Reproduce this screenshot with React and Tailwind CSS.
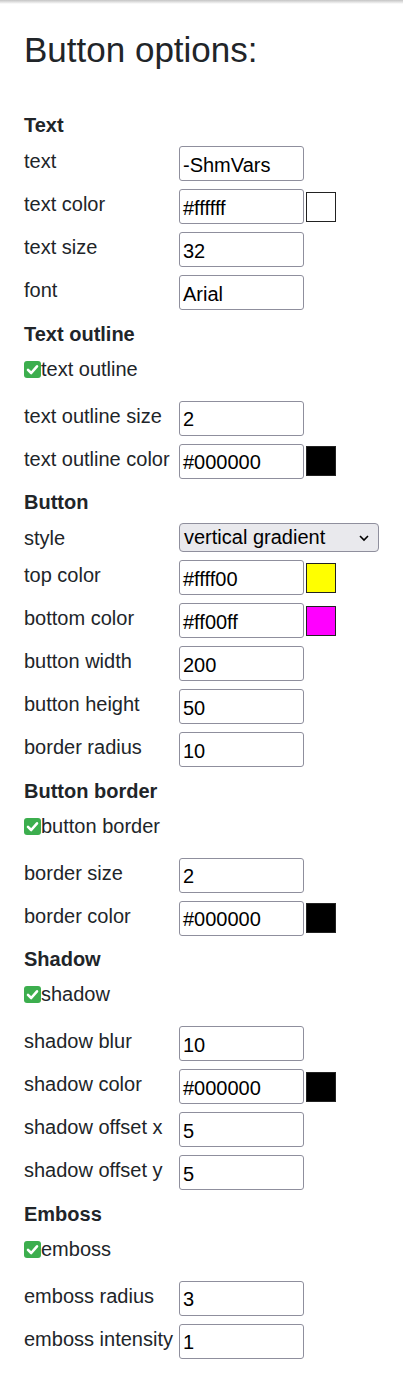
import React from 'react';

const sections = [
    {
        title: 'Text',
        rows: [
            { label: 'text', value: '-ShmVars' },
            { label: 'text color', value: '#ffffff', swatch: '#ffffff' },
            { label: 'text size', value: '32' },
            { label: 'font', value: 'Arial' },
        ],
    },
    {
        title: 'Text outline',
        check: 'text outline',
        rows: [
            { label: 'text outline size', value: '2' },
            { label: 'text outline color', value: '#000000', swatch: '#000000' },
        ],
    },
    {
        title: 'Button',
        rows: [
            { label: 'style', select: 'vertical gradient' },
            { label: 'top color', value: '#ffff00', swatch: '#ffff00' },
            { label: 'bottom color', value: '#ff00ff', swatch: '#ff00ff' },
            { label: 'button width', value: '200' },
            { label: 'button height', value: '50' },
            { label: 'border radius', value: '10' },
        ],
    },
    {
        title: 'Button border',
        check: 'button border',
        rows: [
            { label: 'border size', value: '2' },
            { label: 'border color', value: '#000000', swatch: '#000000' },
        ],
    },
    {
        title: 'Shadow',
        check: 'shadow',
        rows: [
            { label: 'shadow blur', value: '10' },
            { label: 'shadow color', value: '#000000', swatch: '#000000' },
            { label: 'shadow offset x', value: '5' },
            { label: 'shadow offset y', value: '5' },
        ],
    },
    {
        title: 'Emboss',
        check: 'emboss',
        rows: [
            { label: 'emboss radius', value: '3' },
            { label: 'emboss intensity', value: '1' },
        ],
    },
];

function CheckMark() {
    return (
        <svg width="17" height="17" viewBox="0 0 17 17" className="shrink-0">
            <rect x="0" y="0" width="17" height="17" rx="3" fill="#3cae4e" />
            <path d="M4 8.8 L7.2 12 L13 5.3" fill="none" stroke="#ffffff" strokeWidth="2.6" strokeLinecap="round" strokeLinejoin="round" />
        </svg>
    );
}

function Row({ row }) {
    return (
        <div className="flex items-start">
            <div className="w-[155px] shrink-0 pt-[4px] leading-[23px]">{row.label}</div>
            {row.select ? (
                <div className="flex h-[29px] w-[203px] items-center justify-between rounded-[4px] border border-[#8f8f9d] bg-[#e9e9ed] pl-[4px] pr-[8px] text-black leading-[23px]">
                    <span>{row.select}</span>
                    <svg width="12" height="8" viewBox="0 0 12 8">
                        <path d="M2 2 L6 6 L10 2" fill="none" stroke="#000" strokeWidth="1.6" />
                    </svg>
                </div>
            ) : (
                <div className="flex items-center gap-[2px]">
                    <div className="flex h-[35px] w-[125px] items-center rounded-[3px] border border-[#8f8f9d] bg-white px-[3px] pt-[2px] text-black">
                        {row.value}
                    </div>
                    {row.swatch && (
                        <div className="h-[30px] w-[30px] border border-[#222222]" style={{ backgroundColor: row.swatch }} />
                    )}
                </div>
            )}
        </div>
    );
}

function App() {
    return (
        <div className="min-h-screen bg-white text-[20px] text-[#212529]" style={{ fontFamily: '"Liberation Sans", Arial, sans-serif' }}>
            <div className="h-[4px] bg-gradient-to-b from-[#c4c4c4] to-white" />
            <div className="px-[24px] pb-[30px]">
                <h1 className="mt-[26px] text-[35px] leading-[40px] font-normal">Button options:</h1>
                <div className="mt-[44px]">
                    {sections.map((s, i) => (
                        <div key={s.title} className={i === 0 ? '' : 'mt-[12.5px]'}>
                            <div className="h-[23px] font-bold leading-[23px]">{s.title}</div>
                            {s.check && (
                                <div className="mt-[12px] flex h-[23px] items-center leading-[23px]">
                                    <CheckMark />
                                    <span>{s.check}</span>
                                </div>
                            )}
                            <div className={s.check ? 'mt-[20px] flex flex-col gap-[8px]' : 'mt-[9px] flex flex-col gap-[8px]'}>
                                {s.rows.map((r) => (
                                    <Row key={r.label} row={r} />
                                ))}
                            </div>
                        </div>
                    ))}
                </div>
            </div>
        </div>
    );
}

export default App;
